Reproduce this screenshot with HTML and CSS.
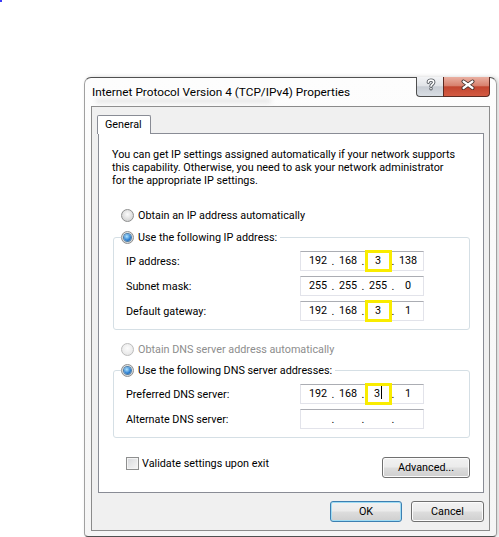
FILE: index.html
```html
<!DOCTYPE html>
<html lang="en">
<head>
    <meta charset="UTF-8">
    <meta name="viewport" content="width=device-width, initial-scale=1.0">
    <title>Internet Protocol Version 4 (TCP/IPv4) Properties</title>
    <link rel="stylesheet" href="styles.css">
</head>
<body>
    <div class="corner-dot"></div>
    <div class="window">
        <div class="titlebar">
            <div class="title">
                <div class="title-text">Internet Protocol Version 4 (TCP/IPv4) Properties</div>
                <div class="ghost"></div>
            </div>
            <div class="caption-buttons">
                <div class="cap help">
                    <svg width="27" height="19" viewBox="0 0 27 19">
                        <path class="glyph-back" d="M11.3 5.2 C11.3 2.4 16.7 2.4 16.7 5.2 C16.7 7.3 14 7.3 14 9.3 M14 11.6 L14 11.8"/>
                        <path class="glyph-front" d="M11.3 5.2 C11.3 2.4 16.7 2.4 16.7 5.2 C16.7 7.3 14 7.3 14 9.3 M14 11.6 L14 11.8"/>
                    </svg>
                </div>
                <div class="cap close">
                    <svg width="47" height="19" viewBox="0 0 47 19">
                        <path class="glyph-back" d="M19.5 4.5 L28.5 11 M28.5 4.5 L19.5 11"/>
                        <path class="glyph-front" d="M19.5 4.5 L28.5 11 M28.5 4.5 L19.5 11"/>
                    </svg>
                </div>
            </div>
        </div>

        <div class="client">
            <div class="tabs">
                <div class="tab">General</div>
            </div>

            <div class="panel">
                <p class="intro">You can get IP settings assigned automatically if your network supports<br>this capability. Otherwise, you need to ask your network administrator<br>for the appropriate IP settings.</p>

                <div class="option"><span class="radio"></span>Obtain an IP address automatically</div>

                <div class="group">
                    <div class="legend"><span class="radio on"></span>Use the following IP address:</div>
                    <div class="field-row">
                        <span>IP address:</span>
                        <div class="ip">
                            <span class="oct">192</span><span class="sep">.</span><span class="oct">168</span><span class="sep">.</span><span class="oct mark">3</span><span class="sep">.</span><span class="oct">138</span>
                        </div>
                    </div>
                    <div class="field-row">
                        <span>Subnet mask:</span>
                        <div class="ip">
                            <span class="oct">255</span><span class="sep">.</span><span class="oct">255</span><span class="sep">.</span><span class="oct">255</span><span class="sep">.</span><span class="oct">0</span>
                        </div>
                    </div>
                    <div class="field-row">
                        <span>Default gateway:</span>
                        <div class="ip">
                            <span class="oct">192</span><span class="sep">.</span><span class="oct">168</span><span class="sep">.</span><span class="oct mark">3</span><span class="sep">.</span><span class="oct">1</span>
                        </div>
                    </div>
                </div>

                <div class="option disabled"><span class="radio"></span>Obtain DNS server address automatically</div>

                <div class="group group-dns">
                    <div class="legend"><span class="radio on"></span>Use the following DNS server addresses:</div>
                    <div class="field-row">
                        <span>Preferred DNS server:</span>
                        <div class="ip">
                            <span class="oct">192</span><span class="sep">.</span><span class="oct">168</span><span class="sep">.</span><span class="oct mark">3<span class="caret"></span></span><span class="sep">.</span><span class="oct">1</span>
                        </div>
                    </div>
                    <div class="field-row">
                        <span>Alternate DNS server:</span>
                        <div class="ip">
                            <span class="oct"></span><span class="sep">.</span><span class="oct"></span><span class="sep">.</span><span class="oct"></span><span class="sep">.</span><span class="oct"></span>
                        </div>
                    </div>
                </div>

                <div class="validate">
                    <label class="check-label"><span class="checkbox"></span>Validate settings upon exit</label>
                    <button class="btn advanced">Advanced...</button>
                </div>
            </div>

            <div class="buttons">
                <button class="btn default">OK</button>
                <button class="btn">Cancel</button>
            </div>
        </div>
    </div>
</body>
</html>
```

FILE: styles.css
```css
* {
    box-sizing: border-box;
}
body {
    margin: 0;
    background: #fff;
    font-family: Roboto, "Segoe UI", sans-serif;
    font-size: 10.8px;
    color: #000;
}
.corner-dot {
    width: 2px;
    height: 2px;
    background: #3b3bf5;
}

/* window frame */
.window {
    margin: 75px 0 0 84px;
    width: 413px;
    height: 460px;
    border: 1px solid #a0a0a0;
    border-top-color: #505050;
    border-bottom-color: #505050;
    border-radius: 7px 7px 4px 4px;
    background: linear-gradient(#fdfdfd, #f5f5f5);
    box-shadow: 2px 0 4px rgba(0,0,0,0.18);
}
.titlebar {
    display: flex;
    justify-content: space-between;
    height: 28px;
    padding-left: 7px;
}
.title {
    padding-top: 6px;
    font-size: 11.8px;
    line-height: 16px;
}
.ghost {
    width: 175px;
    height: 4px;
    margin: -1px 0 0 4px;
    background: #e4e4e4;
    filter: blur(2px);
}
.caption-buttons {
    display: flex;
    height: 20px;
    margin: -1px 6px 0 0;
}
.cap {
    height: 20px;
    border: 1px solid #4e4e4e;
    border-top: none;
}
.cap svg {
    display: block;
}
.help {
    width: 27px;
    border-right: none;
    border-radius: 0 0 0 4px;
    background: linear-gradient(#f3f4f6 0%, #e1e4e8 45%, #c8cdd4 52%, #d9dee4 100%);
}
.close {
    width: 47px;
    border-radius: 0 0 4px 0;
    border-color: #5c2a22;
    background: linear-gradient(#eab0a2 0%, #d8826f 45%, #c24630 52%, #d35a42 100%);
}
.glyph-back {
    fill: none;
    stroke: #3a2a26;
    stroke-width: 4;
    stroke-linecap: round;
}
.glyph-front {
    fill: none;
    stroke: #fff;
    stroke-width: 2.2;
    stroke-linecap: round;
}
.help .glyph-back {
    stroke: #555a60;
    stroke-width: 3.4;
}
.help .glyph-front {
    stroke-width: 1.6;
}

/* client area */
.client {
    height: 425px;
    margin: 0 6px;
    border: 1px solid #8b8b8b;
    background: #f0f0f0;
    padding: 8px 5px 0 6px;
}
.tabs {
    display: flex;
    margin-left: -1px;
}
.tab {
    position: relative;
    z-index: 1;
    height: 19px;
    margin-bottom: -1px;
    padding: 0 8px 0 7px;
    line-height: 17px;
    border: 1px solid #898c95;
    border-bottom: none;
    border-radius: 2px 2px 0 0;
    background: #fff;
}
.panel {
    height: 360px;
    border: 1px solid #898c95;
    background: #fff;
    padding: 14px 13px 0;
}
.intro {
    margin: 0;
    line-height: 13px;
}
.option {
    display: flex;
    align-items: center;
    gap: 4px;
    height: 16px;
    margin-top: 20px;
    padding-left: 9px;
}
.option.disabled {
    margin-top: 11px;
    color: #8d8d8d;
}
.radio {
    flex: none;
    display: flex;
    align-items: center;
    justify-content: center;
    width: 13px;
    height: 13px;
    border: 1px solid #8e8f8f;
    border-radius: 50%;
    background: radial-gradient(circle at 50% 40%, #fbfbfb, #d2d2d2 80%);
}
.option.disabled .radio {
    border-color: #bcbcbc;
    background: radial-gradient(circle at 50% 40%, #fcfcfc, #e6e6e6 80%);
}
.radio.on::after {
    content: "";
    width: 7px;
    height: 7px;
    border-radius: 50%;
    background: radial-gradient(circle at 40% 35%, #b2e6ff, #2c7fd2 60%, #164f8c);
    box-shadow: 0 0 0 1px #4d7fa8;
}

/* group boxes */
.group {
    margin: 14px 0 0 1px;
    padding: 0 0 8px 12px;
    border: 1px solid #d5dfe5;
    border-radius: 3px;
}
.group-dns {
    margin-top: 13px;
}
.legend {
    display: flex;
    align-items: center;
    gap: 4px;
    width: max-content;
    height: 16px;
    margin: -9px 0 0 -5px;
    padding-right: 3px;
    background: #fff;
}
.field-row {
    display: grid;
    grid-template-columns: 174px 124px;
    align-items: center;
    margin-top: 5px;
}
.legend + .field-row {
    margin-top: 6px;
}
.ip {
    display: flex;
    align-items: center;
    height: 20px;
    padding-left: 6px;
    border: 1px solid #e2e3ea;
    border-top-color: #abadb3;
    background: #fff;
}
.oct {
    position: relative;
    width: 22px;
    height: 18px;
    line-height: 18px;
    text-align: center;
}
.sep {
    width: 8px;
    text-align: center;
}
.oct.mark::after {
    content: "";
    position: absolute;
    top: -2px;
    bottom: -2px;
    left: -2px;
    right: -3px;
    border: 3px solid #f9ec00;
}
.caret {
    display: inline-block;
    width: 1px;
    height: 13px;
    margin-left: 1px;
    vertical-align: -2px;
    background: #000;
}

/* bottom controls */
.validate {
    display: flex;
    justify-content: space-between;
    align-items: flex-start;
    margin-top: 17px;
    padding-left: 14px;
}
.check-label {
    display: flex;
    align-items: center;
    gap: 3px;
    height: 16px;
}
.checkbox {
    width: 13px;
    height: 13px;
    border: 1px solid #8e8f8f;
    background: linear-gradient(135deg, #d6d8db, #f7f7f7);
    box-shadow: inset 0 0 0 1px #f4f4f4;
}
.btn {
    height: 21px;
    width: 73px;
    padding: 0;
    font: inherit;
    color: #000;
    border: 1px solid #707070;
    border-radius: 3px;
    background: linear-gradient(#f2f2f2, #ebebeb 48%, #dddddd 52%, #cfcfcf);
    box-shadow: inset 0 0 0 1px #fcfcfc;
}
.btn.advanced {
    width: 88px;
    margin-top: 2px;
}
.btn.default {
    width: 72px;
    border-color: #3c7fb1;
    box-shadow: inset 0 0 0 1px #9fdcf4;
}
.buttons {
    display: flex;
    justify-content: flex-end;
    gap: 9px;
    margin-top: 8px;
}
```
